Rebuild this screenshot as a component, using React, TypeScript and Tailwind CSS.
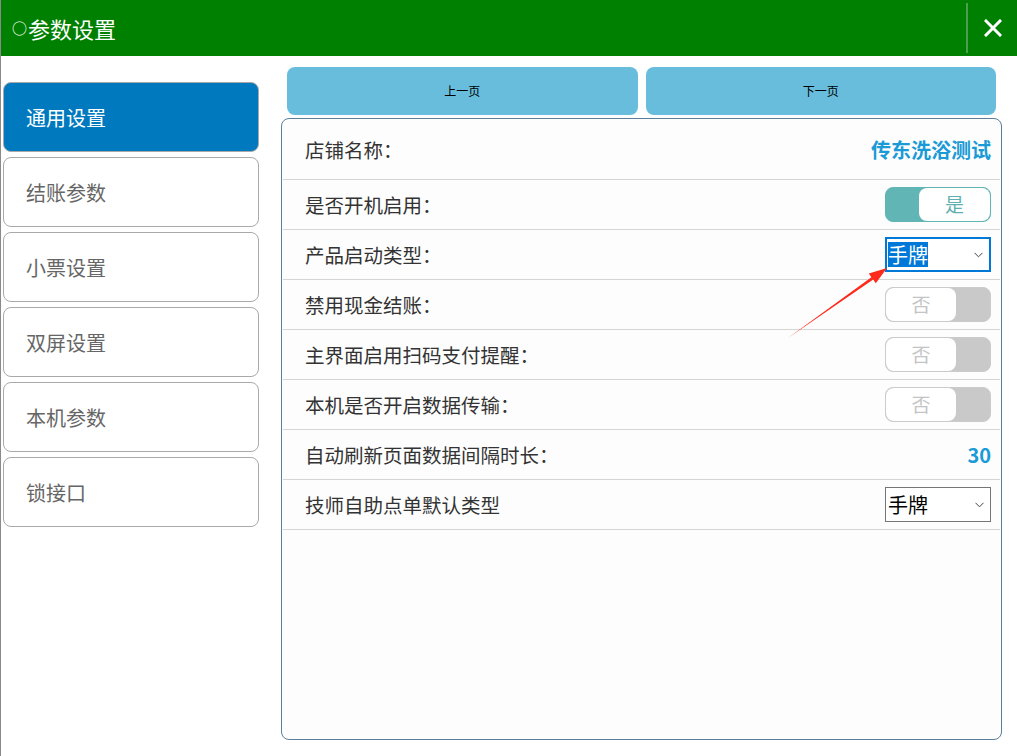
import React from "react";

const FONT = { fontFamily: '"Noto Sans CJK SC", "Microsoft YaHei", sans-serif' };

function ToggleOn() {
  return (
    <div className="flex h-[35px] w-[106px] rounded-[8px] border border-[#62b5b5] bg-[#62b5b5]">
      <div className="w-[33px]" />
      <div className="flex flex-1 items-center justify-center rounded-[8px] bg-white text-[19px] text-[#5fb0b0]">是</div>
    </div>
  );
}

function ToggleOff() {
  return (
    <div className="flex h-[35px] w-[106px] rounded-[8px] border border-[#cbcbcb] bg-[#c9c9c9]">
      <div className="flex w-[70px] items-center justify-center rounded-[8px] bg-white text-[19px] text-[#c4c4c4]">否</div>
      <div className="flex-1" />
    </div>
  );
}

function Chevron() {
  return (
    <svg width="9" height="6" viewBox="0 0 9 6" className="mr-[6px]">
      <polyline points="0.5,0.8 4.5,4.8 8.5,0.8" fill="none" stroke="#444" strokeWidth="1" />
    </svg>
  );
}

function Select({ focused }: { focused?: boolean }) {
  return (
    <div
      className={
        "flex h-[35px] w-[106px] items-center justify-between bg-white " +
        (focused ? "border-2 border-[#0078d7] pl-[1px]" : "border border-[#767676] pl-[2px]")
      }
    >
      <span
        className={
          "text-[20px] leading-[25px] " + (focused ? "bg-[#0078d7] text-white" : "text-black")
        }
      >
        手牌
      </span>
      <Chevron />
    </div>
  );
}

type Row = { label: string; right: React.ReactNode; h?: string };

export default function App() {
  const side = ["通用设置", "结账参数", "小票设置", "双屏设置", "本机参数", "锁接口"];
  const rows: Row[] = [
    {
      label: "店铺名称：",
      right: <span className="text-[20px] font-bold text-[#1a9ad6]">传东洗浴测试</span>,
      h: "h-[61px] pt-[2px]",
    },
    { label: "是否开机启用：", right: <ToggleOn /> },
    { label: "产品启动类型：", right: <Select focused /> },
    { label: "禁用现金结账：", right: <ToggleOff /> },
    { label: "主界面启用扫码支付提醒：", right: <ToggleOff /> },
    { label: "本机是否开启数据传输：", right: <ToggleOff /> },
    {
      label: "自动刷新页面数据间隔时长：",
      right: <span className="text-[20px] font-bold text-[#1a9ad6]">30</span>,
    },
    { label: "技师自助点单默认类型", right: <Select /> },
  ];

  return (
    <div style={FONT} className="relative h-[756px] w-[1017px] overflow-hidden border-l border-[#8a8a8a] bg-white">
      <header className="flex h-[56px] items-center bg-[#008000]">
        <div className="flex items-center pl-[11px] text-[22px] text-white">
          <span className="mr-[1px] text-[15px]">○</span>
          <span>参数设置</span>
        </div>
        <div className="ml-auto flex h-full items-center">
          <div className="h-[50px] w-[2px] bg-[#4c9f4c]" />
          <div className="flex w-[49px] items-center justify-center">
            <svg width="18" height="18" viewBox="0 0 18 18">
              <path d="M2 2 L16 16 M16 2 L2 16" stroke="white" strokeWidth="3" strokeLinecap="square" />
            </svg>
          </div>
        </div>
      </header>

      <div className="flex">
        <nav className="flex w-[258px] flex-col gap-[5px] pl-[2px] pt-[26px]">
          {side.map((s, i) => (
            <div
              key={s}
              className={
                "flex h-[70px] items-center rounded-[8px] border border-[#a9a9a9] pl-[22px] pt-[2px] text-[20px] " +
                (i === 0 ? "bg-[#0079be] text-white" : "bg-white text-[#666]")
              }
            >
              {s}
            </div>
          ))}
        </nav>

        <main className="ml-[22px] flex w-[721px] flex-col pt-[11px]">
          <div className="flex gap-[8px] px-[6px]">
            <button className="flex h-[48px] flex-1 items-center justify-center rounded-[8px] bg-[#67bddb] text-[12px] text-black">
              上一页
            </button>
            <button className="flex h-[48px] flex-1 items-center justify-center rounded-[8px] bg-[#67bddb] text-[12px] text-black">
              下一页
            </button>
          </div>
          <div className="mt-[3px] h-[622px] rounded-[8px] border border-[#5d7e98] bg-[#fdfdfd] px-[1px]">
            {rows.map((r) => (
              <div
                key={r.label}
                className={
                  "flex items-center justify-between border-b border-[#d5d5d5] pl-[22px] pr-[9px] " +
                  (r.h ?? "h-[50px]")
                }
              >
                <span className="text-[19.5px] text-[#333]">{r.label}</span>
                {r.right}
              </div>
            ))}
          </div>
        </main>
      </div>

      <svg className="pointer-events-none absolute left-0 top-0" width="1017" height="756">
        <polygon
          points="787,338 872.2,279.6 874.8,283.3 886,268 867.8,273.5 870.4,277.2"
          fill="#fe2a1b"
        />
      </svg>
    </div>
  );
}
